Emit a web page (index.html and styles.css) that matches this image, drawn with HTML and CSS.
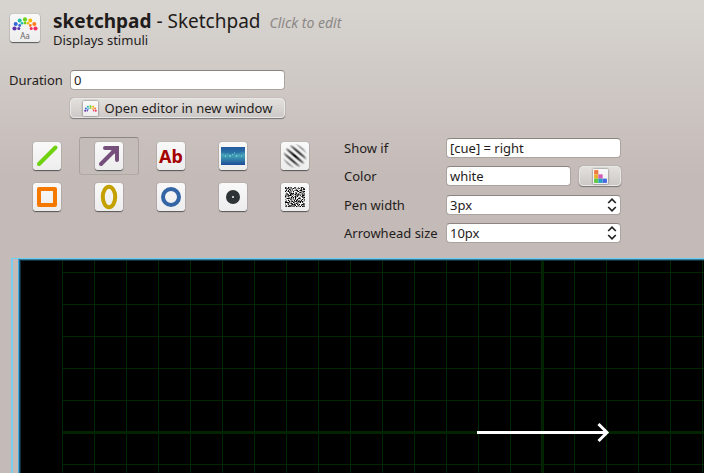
FILE: index.html
```html
<!DOCTYPE html>
<html lang="en">
<head>
<meta charset="utf-8">
<title>sketchpad</title>
<link rel="stylesheet" href="styles.css">
</head>
<body>
<svg class="defs" aria-hidden="true">
  <defs>
    <symbol id="palette" viewBox="0 0 26 14">
      <g fill="#5c35a8"><circle cx="2.5" cy="11.5" r="2.1"/><circle cx="6.8" cy="11.6" r="1.5"/></g>
      <g fill="#3465d8"><circle cx="3.7" cy="6.9" r="2"/><circle cx="7.7" cy="8.5" r="1.4"/></g>
      <g fill="#1fbfa8"><circle cx="7.7" cy="3.6" r="2"/><circle cx="10" cy="6.3" r="1.3"/></g>
      <g fill="#6ed21c"><circle cx="13" cy="2.4" r="2.1"/><circle cx="13" cy="6" r="1.4"/></g>
      <g fill="#f5b800"><circle cx="18.3" cy="3.6" r="2"/><circle cx="16" cy="6.3" r="1.3"/></g>
      <g fill="#ff7a1c"><circle cx="22.3" cy="6.9" r="2"/><circle cx="18.3" cy="8.5" r="1.4"/></g>
      <g fill="#f52c60"><circle cx="23.5" cy="11.5" r="2.1"/><circle cx="19.2" cy="11.6" r="1.5"/></g>
    </symbol>
    <symbol id="spin" viewBox="0 0 10 14">
      <path d="M1.2 5 5 1.2 8.8 5M1.2 9 5 12.8 8.8 9" fill="none" stroke="#222" stroke-width="1.7"/>
    </symbol>
    <linearGradient id="sea" x1="0" y1="0" x2="0" y2="1">
      <stop offset="0" stop-color="#2458a0"/><stop offset=".5" stop-color="#3fa0b4"/><stop offset="1" stop-color="#1c4b97"/>
    </linearGradient>
    <linearGradient id="bars" gradientUnits="userSpaceOnUse" x1="14" y1="14" x2="15.700" y2="12" spreadMethod="reflect">
      <stop offset="0" stop-color="#000"/><stop offset=".25" stop-color="#222"/><stop offset="1" stop-color="#fff" stop-opacity="0"/>
    </linearGradient>
    <radialGradient id="falloff">
      <stop offset="0" stop-color="#fff"/><stop offset=".35" stop-color="#ccc"/><stop offset=".75" stop-color="#777"/><stop offset="1" stop-color="#000"/>
    </radialGradient>
    <mask id="round"><circle cx="14" cy="14" r="12.5" fill="url(#falloff)"/></mask>
    <filter id="noise" x="0" y="0" width="1" height="1" color-interpolation-filters="sRGB">
      <feTurbulence type="fractalNoise" baseFrequency=".83" numOctaves="2" seed="7"/>
      <feColorMatrix values="4 0 0 0 -1.5  4 0 0 0 -1.5  4 0 0 0 -1.5  0 0 0 0 1"/>
    </filter>
    <pattern id="grid" x="43" y="12" width="32" height="32" patternUnits="userSpaceOnUse">
      <path d="M0 .5H32M.5 0V32" fill="none" stroke="#002800"/>
    </pattern>
  </defs>
</svg>

<header class="header">
  <div class="tile tile-large">
    <svg class="palette" aria-hidden="true"><use href="#palette"/></svg>
    <span class="tile-caption">Aa</span>
  </div>
  <div>
    <h1 class="title"><b>sketchpad</b> - Sketchpad <em class="hint">Click to edit</em></h1>
    <p class="subtitle">Displays stimuli</p>
  </div>
</header>

<form class="settings">
  <label for="duration">Duration</label>
  <input class="field" id="duration" type="text" value="0">
  <button class="button open-editor" type="button">
    <span class="tile tile-mini"><svg class="palette" aria-hidden="true"><use href="#palette"/></svg></span>
    Open editor in new window
  </button>
</form>

<div class="controls">
  <div class="tools" role="toolbar" aria-label="Drawing tools">
    <button class="tool" type="button" aria-label="Line"><span class="tile"><svg viewBox="0 0 28 28"><path d="M6 22 22.500 5.500" stroke="#6fd10f" stroke-width="4" stroke-linecap="round"/></svg></span></button>
    <button class="tool selected" type="button" aria-label="Arrow" aria-pressed="true"><span class="tile"><svg viewBox="0 0 28 28"><path d="M6 22 20 8" stroke="#75507b" stroke-width="4" stroke-linecap="round"/><path d="M10 4H24V18Q24 20 22 20T20 18V8H10Q8 8 8 6T10 4Z" fill="#75507b"/><path d="M16 8h4v4Z" fill="#75507b"/></svg></span></button>
    <button class="tool" type="button" aria-label="Text"><span class="tile tile-text">Ab</span></button>
    <button class="tool" type="button" aria-label="Image"><span class="tile"><svg viewBox="0 0 28 28"><rect x="2" y="5" width="24" height="18" fill="url(#sea)"/><path d="M2 5h24v4Q14 14 2 10Z" fill="#205d9d" opacity=".5"/><g fill="#b9eff3" opacity=".8"><circle cx="4" cy="12.500" r=".4"/><circle cx="6.500" cy="14" r=".7"/><circle cx="9" cy="12" r=".4"/><circle cx="11" cy="14" r=".8"/><circle cx="13.500" cy="12.500" r=".5"/><circle cx="15.500" cy="11" r=".6"/><circle cx="17.500" cy="14" r=".8"/><circle cx="20" cy="13" r=".4"/><circle cx="22.500" cy="14" r=".6"/><circle cx="24.500" cy="12.500" r=".4"/></g></svg></span></button>
    <button class="tool" type="button" aria-label="Gabor patch"><span class="tile"><svg viewBox="0 0 28 28"><rect width="28" height="28" fill="url(#bars)" mask="url(#round)"/></svg></span></button>
    <button class="tool" type="button" aria-label="Rectangle"><span class="tile"><svg viewBox="0 0 28 28"><rect x="6" y="6" width="16" height="16" fill="none" stroke="#f57900" stroke-width="4" stroke-linejoin="round"/></svg></span></button>
    <button class="tool" type="button" aria-label="Ellipse"><span class="tile"><svg viewBox="0 0 28 28"><ellipse cx="14" cy="14" rx="6.200" ry="10.200" fill="none" stroke="#c4a000" stroke-width="4"/></svg></span></button>
    <button class="tool" type="button" aria-label="Circle"><span class="tile"><svg viewBox="0 0 28 28"><circle cx="14" cy="14" r="8" fill="none" stroke="#3465a4" stroke-width="4"/></svg></span></button>
    <button class="tool" type="button" aria-label="Fixation dot"><span class="tile"><svg viewBox="0 0 28 28"><circle cx="14" cy="14" r="4" fill="none" stroke="#2e3436" stroke-width="6"/></svg></span></button>
    <button class="tool" type="button" aria-label="Noise patch"><span class="tile"><svg viewBox="0 0 28 28"><rect x="4" y="4" width="20" height="20" filter="url(#noise)"/></svg></span></button>
  </div>

  <form class="properties">
    <label for="showif">Show if</label>
    <input class="field" id="showif" type="text" value="[cue] = right">
    <label for="color">Color</label>
    <div class="color-row">
      <input class="field" id="color" type="text" value="white">
      <button class="button pick" type="button" aria-label="Pick color">
        <span class="tile tile-mini"><svg viewBox="0 0 14 14"><path d="M1 1h4v4H1z" fill="#ee7a43"/><path d="M1 5h4v4H1z" fill="#edb02e"/><path d="M1 9h4v4H1z" fill="#5fc943"/><path d="M5 5h4v4H5z" fill="#d45bb5"/><path d="M5 9h4v4H5z" fill="#28a0c8"/><path d="M9 9h4v4H9z" fill="#466be0"/></svg></span>
      </button>
    </div>
    <label for="pen">Pen width</label>
    <div class="spin">
      <input class="field" id="pen" type="text" role="spinbutton" aria-valuenow="3" value="3px">
      <svg class="spin-arrows" aria-hidden="true"><use href="#spin"/></svg>
    </div>
    <label for="head">Arrowhead size</label>
    <div class="spin">
      <input class="field" id="head" type="text" role="spinbutton" aria-valuenow="10" value="10px">
      <svg class="spin-arrows" aria-hidden="true"><use href="#spin"/></svg>
    </div>
  </form>
</div>

<main class="viewport">
  <svg class="canvas" role="img" aria-label="Canvas with a white arrow">
    <rect width="100%" height="100%" fill="#000"/>
    <rect x="43" width="100%" height="100%" fill="url(#grid)"/>
    <rect x="522" width="3" height="100%" fill="#002300"/>
    <rect x="43" y="171" width="100%" height="3" fill="#002300"/>
    <rect width="100%" height="1" fill="#10303e"/>
    <rect width="1" height="100%" fill="#215f80"/>
    <rect x="1" width="1" height="100%" fill="#0f2d3b"/>
    <path d="M458 172.500H588M579.500 164l8.500 8.500-8.500 8.500" fill="none" stroke="#fff" stroke-width="3"/>
  </svg>
</main>
</body>
</html>
```
FILE: styles.css
```css
* {
  box-sizing: border-box;
}

body {
  margin: 0;
  min-height: 100vh;
  display: flex;
  flex-direction: column;
  overflow: hidden;
  background: #c4bab7 linear-gradient(#d8d5d1, #c4bab7 180px) no-repeat;
  color: #1f1c1b;
  font: 13px/20px "Noto Sans", "Open Sans", sans-serif;
}

button,
input {
  font: inherit;
  color: inherit;
}

.defs {
  position: absolute;
  width: 0;
  height: 0;
}

.header {
  display: flex;
  gap: 13px;
  padding: 10px 10px 0;
}

.title {
  margin: 0;
  font-size: 19px;
  line-height: 22px;
  font-weight: 400;
}

.hint {
  margin-left: 4px;
  color: #8b8886;
  font-size: 14px;
  line-height: 1;
}

.subtitle {
  margin: 0;
  line-height: 16px;
}

.tile {
  display: flex;
  flex-direction: column;
  align-items: center;
  justify-content: center;
  width: 28px;
  height: 28px;
  border-radius: 3px;
  background: linear-gradient(#f9f9f9, #ededed);
  box-shadow: 0 1px 1px #555, 0 0 1px #777;
}

.tile > svg {
  width: 100%;
  height: 100%;
}

.tile-large {
  margin-top: 4px;
  width: 30px;
}

.tile > .palette {
  width: 26px;
  height: 14px;
}

.tile-caption {
  color: #666;
  font-size: 8px;
  line-height: 9px;
}

.tile-text {
  color: #a40000;
  font-size: 18px;
  font-weight: 700;
}

.tile-mini {
  width: 15px;
  height: 15px;
  border-radius: 1px;
  box-shadow: 0 0 2px #444;
}

.tile-mini > .palette {
  width: 13px;
  height: 9px;
}

.field {
  width: 100%;
  min-width: 0;
  height: 20px;
  padding: 0 3px;
  border: 1px solid #aaa3a0;
  border-top-color: #8b8481;
  border-radius: 4px;
  background: #fff;
}

.button {
  display: flex;
  align-items: center;
  justify-content: center;
  gap: 7px;
  height: 20px;
  padding: 0 11px;
  border: 1px solid #eae8e6;
  border-radius: 4px;
  background: linear-gradient(#e2e0dd, #cdc9c6);
  box-shadow: 0 1px 1px #777, 0 0 1px #777;
  white-space: nowrap;
}

.settings {
  display: grid;
  grid-template-columns: 54px max-content;
  gap: 8px 7px;
  padding: 22px 9px 0;
}

.open-editor {
  grid-column: 2;
  width: 215px;
}

.controls {
  display: flex;
  align-items: flex-start;
  gap: 19px;
  padding: 19px 17px 15px;
}

.tools {
  display: grid;
  grid-template-columns: repeat(5, 60px);
  gap: 3px 2px;
}

.tool {
  display: grid;
  place-items: center;
  height: 38px;
  padding: 0;
  border: 1px solid transparent;
  border-radius: 3px;
  background: none;
}

.tool.selected {
  border-color: #8d8784 #aaa29f #b0a8a5;
  background: #c3bcb8;
}

.properties {
  display: grid;
  grid-template-columns: 95px 175px;
  gap: 8px 7px;
  padding-top: 1px;
  white-space: nowrap;
}

.color-row {
  display: flex;
  gap: 8px;
  height: 21px;
}

.color-row .field {
  flex: 1;
}

.pick {
  width: 42px;
}

.spin {
  display: grid;
  align-items: center;
}

.spin > * {
  grid-area: 1 / 1;
}

.spin-arrows {
  justify-self: end;
  width: 10px;
  height: 14px;
  margin-right: 4px;
}

.viewport {
  flex: 1;
  display: flex;
  margin-left: 11px;
  padding-left: 5px;
  border-top: 1px solid #6dcff6;
  border-left: 2px solid #7bcdf0;
}

.canvas {
  flex: 1;
  min-width: 0;
  min-height: 210px;
  border-top: 1px solid #397996;
  border-left: 1px solid #3caee4;
}
```
